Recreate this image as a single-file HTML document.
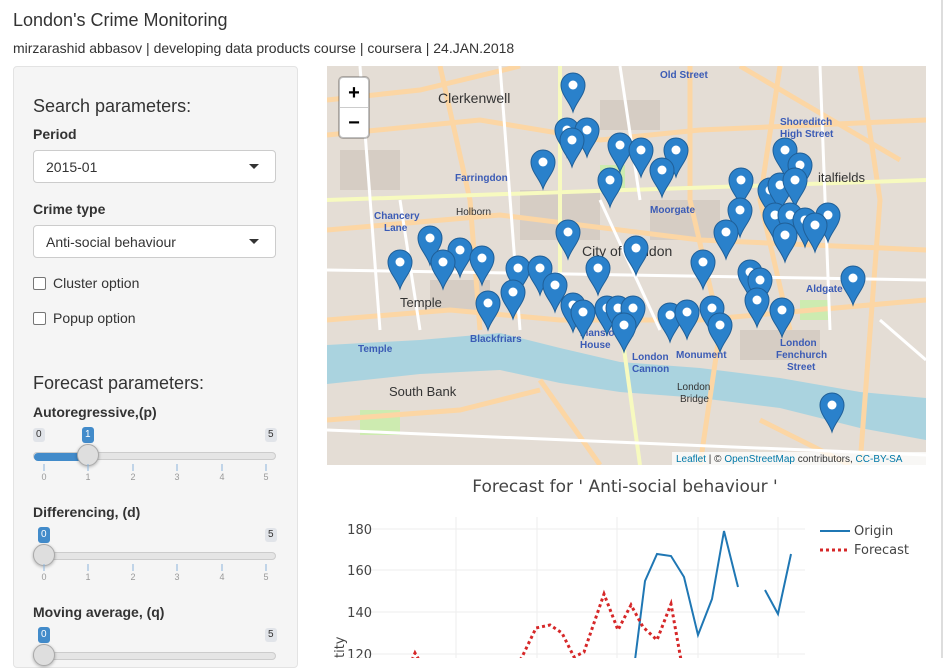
<!DOCTYPE html>
<html><head><meta charset="utf-8"><style>
body{margin:0;width:943px;height:658px;overflow:hidden;background:#fff;font-family:"Liberation Sans",Arial,sans-serif;color:#333;position:relative}
.a{position:absolute}
h1{position:absolute;left:13px;top:10px;margin:0;font-size:18px;font-weight:normal}
.sub{left:13px;top:40px;font-size:14px}
.well{left:13px;top:66px;width:283px;height:600px;background:#f5f5f5;border:1px solid #e3e3e3;border-radius:4px}
.h3{font-size:18px;left:33px}
.lbl{font-size:14px;font-weight:bold;left:33px}
.sel{left:33px;width:243px;height:33px;background:#fff;border:1px solid #ccc;border-radius:4px;font-size:14px;box-sizing:border-box;padding:8px 12px}
.sel:after{content:"";position:absolute;right:16px;top:13px;border-left:5px solid transparent;border-right:5px solid transparent;border-top:5px solid #333}
.cb{left:33px;width:11px;height:11px;border:1px solid #767676;background:#fff;border-radius:2px}
.cbt{left:53px;font-size:14px}
.track{left:33px;width:243px;height:8px;background:#e5e5e5;border:1px solid #ccc;border-radius:5px;box-sizing:border-box}
.fill{height:8px;background:#428bca;border-radius:5px 0 0 5px}
.knob{width:22px;height:22px;border-radius:50%;background:#dedede;border:1px solid #aaa;box-sizing:border-box;box-shadow:0 1px 3px rgba(0,0,0,.3)}
.tag{font-size:10px;padding:0 3px;border-radius:3px;background:#e1e4e9;color:#333;line-height:14px}
.tag.b{background:#428bca;color:#fff}
</style></head><body>
<h1>London's Crime Monitoring</h1>
<div class="a sub">mirzarashid abbasov | developing data products course | coursera | 24.JAN.2018</div>
<div style="position:absolute;right:0;top:0;width:2px;height:658px;background:#ddd"></div>
<div class="a well"></div>
<div class="a h3" style="top:96px">Search parameters:</div>
<div class="a lbl" style="top:126px">Period</div>
<div class="a sel" style="top:150px">2015-01</div>
<div class="a lbl" style="top:201px">Crime type</div>
<div class="a sel" style="top:225px">Anti-social behaviour</div>
<div class="a cb" style="top:277px"></div><div class="a cbt" style="top:275px">Cluster option</div>
<div class="a cb" style="top:312px"></div><div class="a cbt" style="top:310px">Popup option</div>
<div class="a h3" style="top:373px">Forecast parameters:</div>

<div class="a lbl" style="top:404px">Autoregressive,(p)</div>
<div class="a tag" style="left:33px;top:428px">0</div><div class="a tag b" style="left:82px;top:427px;line-height:16px">1</div><div class="a tag" style="left:265px;top:428px">5</div>
<div class="a track" style="top:452px"><div class="fill" style="width:55px"></div></div>
<div class="a knob" style="left:77px;top:444px"></div>

<div class="a lbl" style="top:504px">Differencing, (d)</div>
<div class="a tag b" style="left:38px;top:527px;line-height:16px">0</div><div class="a tag" style="left:265px;top:528px">5</div>
<div class="a track" style="top:552px"></div>
<div class="a knob" style="left:33px;top:544px"></div>

<div class="a lbl" style="top:604px">Moving average, (q)</div>
<div class="a tag b" style="left:38px;top:627px;line-height:16px">0</div><div class="a tag" style="left:265px;top:628px">5</div>
<div class="a track" style="top:652px"></div>
<div class="a knob" style="left:33px;top:644px"></div>

<svg class="a" style="left:0;top:0" width="300" height="658">
<g stroke="#8ab4dc" stroke-width="1">
<path d="M44 464v7M88 464v7M133 464v7M177 464v7M222 464v7M266 464v7M44 564v7M88 564v7M133 564v7M177 564v7M222 564v7M266 564v7"/></g>
<g fill="#999" font-size="9" text-anchor="middle" font-family="Liberation Sans">
<text x="44" y="480">0</text><text x="88" y="480">1</text><text x="133" y="480">2</text><text x="177" y="480">3</text><text x="222" y="480">4</text><text x="266" y="480">5</text>
<text x="44" y="580">0</text><text x="88" y="580">1</text><text x="133" y="580">2</text><text x="177" y="580">3</text><text x="222" y="580">4</text><text x="266" y="580">5</text></g>
</svg>

<svg class="a" style="left:327px;top:66px" width="599" height="399" viewBox="327 66 599 399">
<rect x="327" y="66" width="599" height="399" fill="#e4ddd5"/>
<g fill="#d6cdc4"><rect x="340" y="150" width="60" height="40"/><rect x="520" y="190" width="80" height="50"/><rect x="650" y="200" width="70" height="40"/><rect x="430" y="280" width="60" height="30"/><rect x="740" y="330" width="80" height="30"/><rect x="600" y="100" width="60" height="30"/></g>
<g fill="#cdebb0"><rect x="600" y="165" width="25" height="25"/><rect x="800" y="300" width="30" height="20"/><rect x="360" y="410" width="40" height="25"/></g>
<path d="M327 345 L420 340 L500 333 L560 348 L620 362 L700 368 L780 378 L860 392 L926 398 L926 440 L860 428 L780 408 L700 398 L620 392 L560 383 L500 370 L420 374 L327 384Z" fill="#aad3df"/>
<g fill="none" stroke="#fcd6a4" stroke-width="5">
<path d="M327 135 L480 120 L600 140 L700 130 L926 120"/><path d="M327 320 L450 310 L560 320 L700 320 L926 300"/><path d="M440 66 L470 200 L480 330"/><path d="M690 66 L690 200 L720 330 L700 465"/><path d="M780 66 L760 200 L790 330"/><path d="M327 230 L500 215 L700 240 L926 250"/><path d="M540 380 L600 465"/><path d="M860 66 L880 200 L860 465"/><path d="M327 100 L420 90 L520 66"/><path d="M740 66 L900 160"/><path d="M327 420 L460 410 L540 390"/><path d="M760 420 L850 465"/></g>
<g fill="none" stroke="#f7fabf" stroke-width="4"><path d="M560 66 L560 300"/><path d="M327 200 L926 180"/><path d="M620 320 L640 465"/></g>
<g fill="none" stroke="#fff" stroke-width="3"><path d="M360 66 L380 330"/><path d="M327 270 L926 280"/><path d="M500 66 L520 330"/><path d="M600 200 L660 330"/><path d="M820 66 L830 330"/><path d="M327 430 L926 455"/><path d="M620 66 L640 200"/><path d="M400 200 L420 330"/><path d="M880 320 L926 360"/></g>
<g fill="#3b5bb5" font-size="10" font-weight="bold" font-family="Liberation Sans"><text x="660" y="78">Old Street</text><text x="455" y="181">Farringdon</text><text x="650" y="213">Moorgate</text><text x="780" y="125">Shoreditch</text><text x="780" y="137">High Street</text><text x="374" y="219">Chancery</text><text x="384" y="231">Lane</text><text x="470" y="342">Blackfriars</text><text x="358" y="352">Temple</text><text x="632" y="360">London</text><text x="632" y="372">Cannon</text><text x="676" y="358">Monument</text><text x="780" y="346">London</text><text x="776" y="358">Fenchurch</text><text x="787" y="370">Street</text><text x="806" y="292">Aldgate</text><text x="580" y="336">Mansion</text><text x="580" y="348">House</text></g>
<g fill="#333" font-family="Liberation Sans"><text x="438" y="103" font-size="14">Clerkenwell</text><text x="582" y="256" font-size="14">City of London</text><text x="400" y="307" font-size="13">Temple</text><text x="389" y="396" font-size="13">South Bank</text><text x="818" y="182" font-size="13">italfields</text><text x="456" y="215" font-size="10">Holborn</text><text x="677" y="390" font-size="10">London</text><text x="680" y="402" font-size="10">Bridge</text></g>
<g id="pins"></g>
<rect x="339" y="77" width="30" height="61" rx="4" fill="#fff" stroke="rgba(0,0,0,.25)" stroke-width="2"/>
<line x1="340" y1="107.5" x2="368" y2="107.5" stroke="#ccc"/>
<text x="354" y="99" font-size="20" font-weight="bold" text-anchor="middle" fill="#000" font-family="Liberation Sans">+</text>
<text x="354" y="129" font-size="20" font-weight="bold" text-anchor="middle" fill="#000" font-family="Liberation Sans">−</text>
<rect x="672" y="452" width="254" height="13" fill="rgba(255,255,255,.75)"/>
<text x="676" y="462" font-size="10" fill="#333" font-family="Liberation Sans"><tspan fill="#0078a8">Leaflet</tspan> | © <tspan fill="#0078a8">OpenStreetMap</tspan> contributors, <tspan fill="#0078a8">CC-BY-SA</tspan></text>
</svg>

<svg class="a" style="left:320px;top:470px" width="623" height="188" viewBox="320 470 623 188">
<text x="625" y="492" font-size="17" text-anchor="middle" fill="#444" font-family="DejaVu Sans">Forecast for ' Anti-social behaviour '</text>
<g stroke="#eee" stroke-width="1"><path d="M365 529H805M365 570H805M365 612H805M365 654H805M456 517V658M537 517V658M617 517V658M698 517V658M778 517V658"/></g>
<g fill="#444" font-size="13" text-anchor="end" font-family="DejaVu Sans"><text x="372" y="534">180</text><text x="372" y="575">160</text><text x="372" y="617">140</text><text x="372" y="659">120</text></g>
<text transform="translate(344,658) rotate(-90)" font-size="13" fill="#444" font-family="DejaVu Sans">tity</text>
<polyline fill="none" stroke="#1f77b4" stroke-width="2" points="635,660 645,581 657,554 671,556 684,577 698,635 712,599 724,531 738,587"/>
<polyline fill="none" stroke="#1f77b4" stroke-width="2" points="765,590 778,614 791,554"/>
<polyline fill="none" stroke="#d62728" stroke-width="3" stroke-dasharray="3,3" points="412,660 415,653 419,660"/>
<polyline fill="none" stroke="#d62728" stroke-width="3" stroke-dasharray="3,3" points="520,660 522,657 536,628 550,625 562,633 574,657 584,652 604,594 618,630 631,605 643,627 657,640 671,604 681,660"/>
<line x1="820" y1="531" x2="850" y2="531" stroke="#1f77b4" stroke-width="2"/>
<line x1="820" y1="550" x2="850" y2="550" stroke="#d62728" stroke-width="3" stroke-dasharray="3,3"/>
<g fill="#444" font-size="13" font-family="DejaVu Sans"><text x="854" y="535">Origin</text><text x="854" y="554">Forecast</text></g>
</svg>

<script>
var p=[[573,85],[567,130],[587,130],[572,140],[620,145],[641,150],[676,150],[662,170],[543,162],[610,180],[741,180],[785,150],[800,165],[770,190],[780,185],[795,180],[740,210],[775,215],[790,215],[805,220],[828,215],[815,225],[785,235],[726,232],[568,232],[430,238],[460,250],[482,258],[443,262],[400,262],[518,268],[540,268],[598,268],[636,248],[703,262],[750,272],[760,280],[555,285],[513,292],[488,303],[573,305],[583,312],[607,308],[618,308],[633,308],[624,325],[670,315],[687,312],[712,308],[720,325],[757,300],[782,310],[853,278],[832,405]];
var s="";p.forEach(function(c){var x=c[0],y=c[1];s+='<path d="M'+x+' '+(y+27)+' C'+(x-3)+' '+(y+17)+' '+(x-12)+' '+(y+10)+' '+(x-12)+' '+y+' A12 12 0 0 1 '+(x+12)+' '+y+' C'+(x+12)+' '+(y+10)+' '+(x+3)+' '+(y+17)+' '+x+' '+(y+27)+'Z" fill="#2a81cb" stroke="#1f5f98" stroke-width="1"/><circle cx="'+x+'" cy="'+y+'" r="4.5" fill="#fff"/>';});
document.getElementById("pins").innerHTML=s;
</script>
</body></html>
